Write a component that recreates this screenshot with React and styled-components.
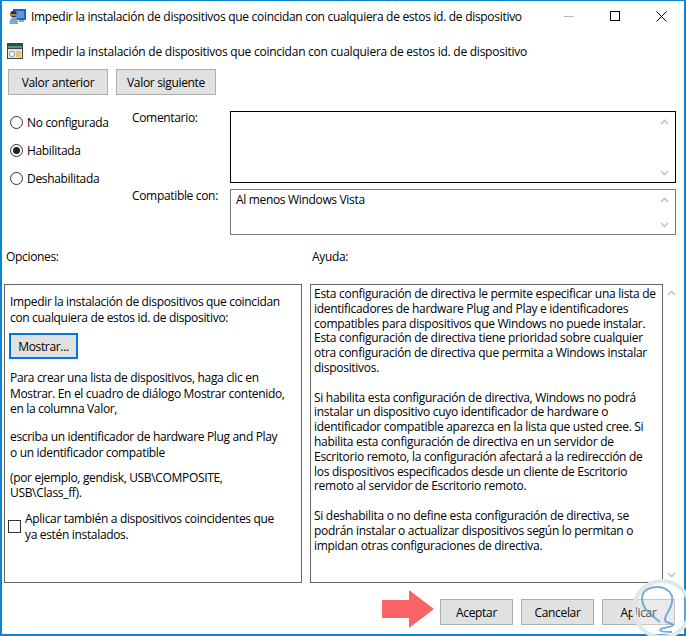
import React from 'react';
import styled, { createGlobalStyle } from 'styled-components';

const GlobalStyle = createGlobalStyle`
  html, body {
    margin: 0;
    padding: 0;
    background: #fff;
  }
  body {
    font-family: "Open Sans", "Liberation Sans", sans-serif;
    font-size: 12px;
    color: #000;
  }
`;

const Window = styled.div`
  position: relative;
  box-sizing: border-box;
  width: 686px;
  height: 636px;
  padding: 1px 2px 2px 2px;
  box-shadow: inset 2px 1px 0 #0a84d8, inset -2px -2px 0 #0a84d8;
  background: #fff;
  overflow: hidden;
  letter-spacing: -0.33px;
`;

const TitleBar = styled.div`
  display: flex;
  align-items: center;
  height: 30px;
  padding-left: 7px;
  letter-spacing: -0.3px;
`;

const TitleText = styled.span`
  flex: 1;
  margin-left: 5px;
`;

const WinButton = styled.div`
  width: 46px;
  height: 30px;
  display: flex;
  align-items: center;
  justify-content: center;
`;

const Heading = styled.div`
  display: flex;
  align-items: center;
  height: 20px;
  margin-top: 10px;
  padding-left: 5px;
  letter-spacing: -0.245px;
`;

const HeadingText = styled.span`
  margin-left: 8px;
`;

const NavRow = styled.div`
  display: flex;
  gap: 8px;
  margin-top: 8px;
  padding-left: 6px;
`;

const Button = styled.button`
  box-sizing: border-box;
  display: block;
  width: ${(p) => p.$width || 100}px;
  height: 26px;
  padding: 0;
  margin-left: ${(p) => p.$shift || 0}px;
  border: ${(p) => (p.$focused ? '2px solid #0078d7' : '1px solid #adadad')};
  background: #e1e1e1;
  font: inherit;
  letter-spacing: inherit;
  color: #000;
`;

const StateSection = styled.div`
  display: flex;
  margin-top: 16px;
`;

const RadioColumn = styled.div`
  display: flex;
  flex-direction: column;
  gap: 8px;
  width: 130px;
  padding: 1px 0 0 8px;
  box-sizing: border-box;
`;

const RadioRow = styled.label`
  display: flex;
  align-items: center;
  gap: 4px;
  height: 20px;
`;

const RadioMark = styled.span`
  box-sizing: border-box;
  width: 13px;
  height: 13px;
  border: 1px solid #333;
  border-radius: 50%;
  display: flex;
  align-items: center;
  justify-content: center;
  &::after {
    content: '';
    width: 7px;
    height: 7px;
    border-radius: 50%;
    background: ${(p) => (p.$checked ? '#222' : 'transparent')};
  }
`;

const FieldColumn = styled.div`
  display: flex;
  flex-direction: column;
  gap: 6px;
`;

const FieldRow = styled.div`
  display: flex;
`;

const FieldLabel = styled.span`
  width: 98px;
  margin-top: -2px;
`;

const TextBox = styled.div`
  position: relative;
  box-sizing: border-box;
  width: 446px;
  height: ${(p) => p.$height}px;
  border: 1px solid ${(p) => (p.$active ? '#000' : '#7a7a7a')};
  padding: 1px 5px;
`;

const ScrollArrow = styled.svg`
  position: absolute;
  right: ${(p) => (p.$outer ? -14 : 6)}px;
  ${(p) => (p.$down
    ? `bottom: ${p.$outer ? 4 : 6}px;`
    : `top: ${p.$outer ? 5 : 7}px;`)}
  width: 9px;
  height: 6px;
`;

const PaneLabels = styled.div`
  display: flex;
  margin-top: 12px;
  height: 18px;
  align-items: center;
`;

const PaneLabel = styled.span`
  width: ${(p) => p.$width}px;
  padding-left: 4px;
  box-sizing: border-box;
`;

const Panes = styled.div`
  display: flex;
  gap: 8px;
  margin-top: 19px;
  padding-left: 2px;
`;

const Pane = styled.div`
  position: relative;
  box-sizing: border-box;
  flex: none;
  width: ${(p) => p.$width}px;
  height: 299px;
  border: 1px solid #666;
  padding: ${(p) => p.$pad};
  letter-spacing: ${(p) => p.$spacing};
`;

const Para = styled.p`
  margin: ${(p) => p.$top ?? 0}px 0 ${(p) => p.$gap ?? 0}px;
  line-height: ${(p) => p.$line}px;
  white-space: nowrap;
`;

const CheckRow = styled.div`
  display: flex;
  gap: 4px;
  margin-left: -2px;
`;

const CheckBox = styled.span`
  box-sizing: border-box;
  flex: none;
  width: 13px;
  height: 13px;
  margin-top: 9px;
  border: 1px solid #333;
`;

const Footer = styled.div`
  display: flex;
  align-items: flex-start;
  justify-content: flex-end;
  gap: 8px;
  margin-top: 16px;
  padding-right: 9px;
`;

const Arrow = styled.svg`
  width: 52px;
  height: 38px;
  margin-top: -9px;
  margin-right: -2px;
`;

const Watermark = styled.svg`
  position: absolute;
  right: 0;
  bottom: 0;
  width: 60px;
  height: 76px;
`;

function AppIcon() {
  return (
    <svg width="17" height="17" viewBox="0 0 17 17">
      <rect x="4.5" y="1.5" width="12" height="10" fill="#1f63c0" stroke="#4a5a70" />
      <rect x="6" y="3" width="9" height="7" fill="#4f9be8" />
      <rect x="10" y="12" width="5" height="2" fill="#9aa4ae" />
      <circle cx="4.5" cy="6" r="3.2" fill="#2a3440" />
      <path d="M1 6h7v2H1z" fill="#b07a30" />
      <path d="M0.5 16c0-4.500 2-7 4.500-7s4 2.500 4 7z" fill="#7da6d8" />
    </svg>
  );
}

function PolicyIcon() {
  return (
    <svg width="16" height="16" viewBox="0 0 16 16">
      <rect x="0" y="0" width="16" height="16" fill="#3c4646" />
      <rect x="1" y="3" width="14" height="2" fill="#4f9a88" />
      <rect x="1" y="6" width="14" height="9" fill="#e2e5d8" />
      <rect x="9" y="8" width="5" height="6" fill="#e0c878" />
      <circle cx="5" cy="11" r="2.6" fill="#fff" stroke="#8a9a9a" />
    </svg>
  );
}

function Scrollbar({ outer }) {
  return (
    <>
      <ScrollArrow $outer={outer} viewBox="0 0 9 6"><path d="M1 5l3.500-3.500L8 5" fill="none" stroke="#c4c4c4" strokeWidth="1.6" /></ScrollArrow>
      <ScrollArrow $outer={outer} $down viewBox="0 0 9 6"><path d="M1 1l3.500 3.500L8 1" fill="none" stroke="#c4c4c4" strokeWidth="1.6" /></ScrollArrow>
    </>
  );
}

export default function App() {
  return (
    <Window>
      <GlobalStyle />
      <TitleBar>
        <AppIcon />
        <TitleText>Impedir la instalación de dispositivos que coincidan con cualquiera de estos id. de dispositivo</TitleText>
        <WinButton>
          <svg width="11" height="11" viewBox="0 0 11 11"><path d="M0 5.500h10" stroke="#bbb" /></svg>
        </WinButton>
        <WinButton>
          <svg width="11" height="11" viewBox="0 0 11 11"><rect x="0.5" y="0.5" width="9" height="9" fill="none" stroke="#000" /></svg>
        </WinButton>
        <WinButton>
          <svg width="11" height="11" viewBox="0 0 11 11"><path d="M0.500 0.500l10 10M10.500 0.500l-10 10" stroke="#000" /></svg>
        </WinButton>
      </TitleBar>
      <Heading>
        <PolicyIcon />
        <HeadingText>Impedir la instalación de dispositivos que coincidan con cualquiera de estos id. de dispositivo</HeadingText>
      </Heading>
      <NavRow>
        <Button>Valor anterior</Button>
        <Button>Valor siguiente</Button>
      </NavRow>
      <StateSection>
        <RadioColumn>
          <RadioRow><RadioMark />No configurada</RadioRow>
          <RadioRow><RadioMark $checked />Habilitada</RadioRow>
          <RadioRow><RadioMark />Deshabilitada</RadioRow>
        </RadioColumn>
        <FieldColumn>
          <FieldRow>
            <FieldLabel>Comentario:</FieldLabel>
            <TextBox $height={72} $active><Scrollbar /></TextBox>
          </FieldRow>
          <FieldRow>
            <FieldLabel>Compatible con:</FieldLabel>
            <TextBox $height={46}>Al menos Windows Vista<Scrollbar /></TextBox>
          </FieldRow>
        </FieldColumn>
      </StateSection>
      <PaneLabels>
        <PaneLabel $width={306}>Opciones:</PaneLabel>
        <PaneLabel $width={300}>Ayuda:</PaneLabel>
      </PaneLabels>
      <Panes>
        <Pane $width={298} $pad="9px 5px 0 5px">
          <Para $line={16} $gap={7}>Impedir la instalación de dispositivos que coincidan<br />con cualquiera de estos id. de dispositivo:</Para>
          <Button $width={69} $shift={-1} $focused>Mostrar...</Button>
          <Para $line={15.500} $top={11} $gap={12.500}>Para crear una lista de dispositivos, haga clic en<br />Mostrar. En el cuadro de diálogo Mostrar contenido,<br />en la columna Valor,</Para>
          <Para $line={15.500} $gap={9.500}>escriba un identificador de hardware Plug and Play<br />o un identificador compatible</Para>
          <Para $line={15.500} $gap={10.500}>(por ejemplo, gendisk, USB\COMPOSITE,<br />USB\Class_ff).</Para>
          <CheckRow>
            <CheckBox />
            <Para $line={16}>Aplicar también a dispositivos coincidentes que<br />ya estén instalados.</Para>
          </CheckRow>
        </Pane>
        <Pane $width={353} $pad="2px 3px 0 3px" $spacing="-0.29px">
          <Para $line={14.800} $gap={14.800}>Esta configuración de directiva le permite especificar una lista de<br />identificadores de hardware Plug and Play e identificadores<br />compatibles para dispositivos que Windows no puede instalar.<br />Esta configuración de directiva tiene prioridad sobre cualquier<br />otra configuración de directiva que permita a Windows instalar<br />dispositivos.</Para>
          <Para $line={14.800} $gap={14.800}>Si habilita esta configuración de directiva, Windows no podrá<br />instalar un dispositivo cuyo identificador de hardware o<br />identificador compatible aparezca en la lista que usted cree. Si<br />habilita esta configuración de directiva en un servidor de<br />Escritorio remoto, la configuración afectará a la redirección de<br />los dispositivos especificados desde un cliente de Escritorio<br />remoto al servidor de Escritorio remoto.</Para>
          <Para $line={14.800}>Si deshabilita o no define esta configuración de directiva, se<br />podrán instalar o actualizar dispositivos según lo permitan o<br />impidan otras configuraciones de directiva.</Para>
          <Scrollbar outer />
        </Pane>
      </Panes>
      <Footer>
        <Arrow viewBox="0 0 52 38"><path d="M0 10h27V0l25 19-25 19V28H0z" fill="#fb6467" /></Arrow>
        <Button $width={73}>Aceptar</Button>
        <Button $width={73}>Cancelar</Button>
        <Button $width={73}>Aplicar</Button>
      </Footer>
      <Watermark viewBox="0 0 60 76">
        <circle cx="36" cy="49" r="28" fill="#fff" fillOpacity="0.3" stroke="#dfe7ea" strokeWidth="4" />
        <path d="M34 62C27 56 16 50 16 38C16 31 23 27 31 27C40 27 48 33 46 42C45 50 39 54 39 60C39 63 47 63 47 65C46 68 34 67 34 70C34 72 42 72 46 72" fill="none" stroke="#5f9fd0" strokeOpacity="0.85" strokeWidth="2" />
      </Watermark>
    </Window>
  );
}
